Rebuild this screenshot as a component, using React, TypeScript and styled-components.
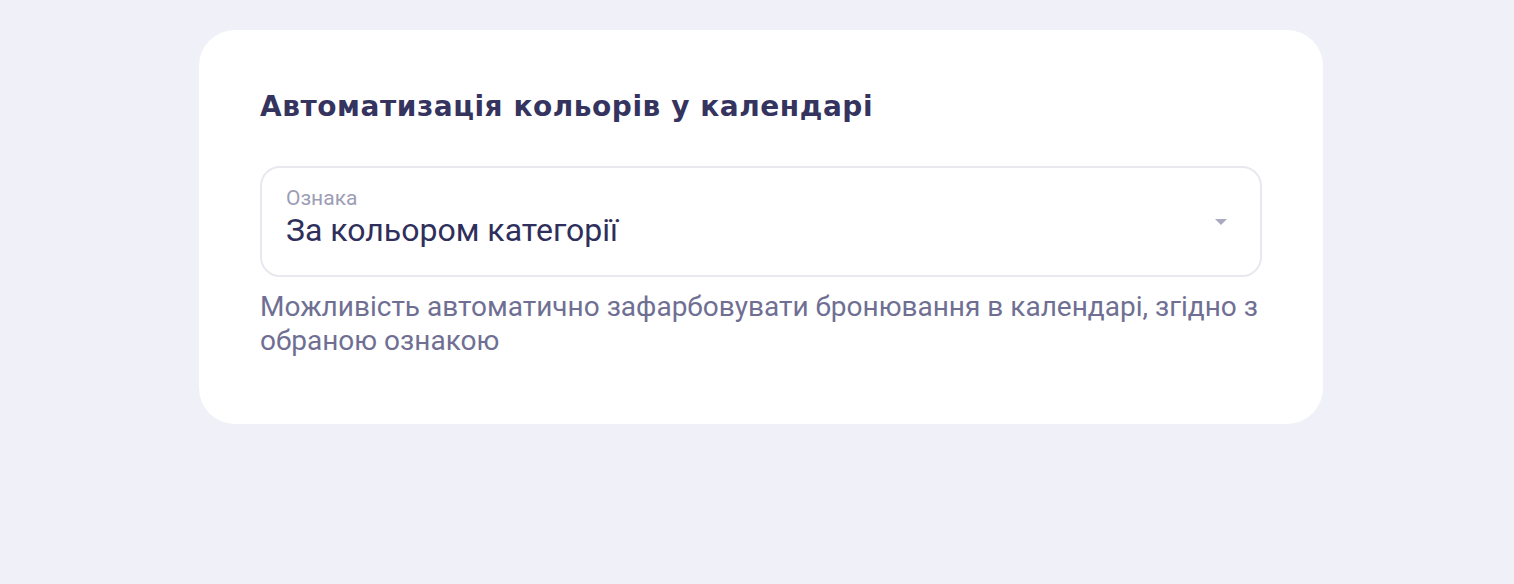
import React from "react";
import styled, { createGlobalStyle } from "styled-components";

const Global = createGlobalStyle`
  html, body { margin: 0; padding: 0; background: #f0f0f9; }
  body { font-family: Roboto, "Noto Sans", sans-serif; }
`;

const Page = styled.div`
  min-height: 584px;
  box-sizing: border-box;
  padding: 30px 0 0 199px;
`;

const Card = styled.section`
  width: 1124px;
  box-sizing: border-box;
  background: #ffffff;
  border-radius: 36px;
  padding: 57px 61px 66px;
  display: flex;
  flex-direction: column;
`;

const Title = styled.h2`
  margin: 0 0 39px;
  font-family: "DejaVu Sans", Lato, sans-serif;
  font-weight: 700;
  font-size: 28px;
  line-height: 40px;
  letter-spacing: 0.55px;
  color: #34345f;
`;

const Select = styled.div`
  height: 111px;
  box-sizing: border-box;
  border: 2px solid #e8e8ef;
  border-radius: 20px;
  padding: 18px 33px 0 24px;
  display: flex;
  align-items: center;
  justify-content: space-between;
`;

const Field = styled.div`
  display: flex;
  flex-direction: column;
  align-self: flex-start;
`;

const Label = styled.span`
  font-size: 21px;
  line-height: 24px;
  color: #9d9db5;
`;

const Value = styled.span`
  margin-top: 1px;
  font-size: 32px;
  line-height: 38px;
  color: #2f2f5c;
`;

const Caret = styled.svg`
  width: 12px;
  height: 6px;
  margin-bottom: 18px;
`;

const Hint = styled.p`
  margin: 13px 0 0;
  font-size: 28px;
  line-height: 34px;
  color: #6f6f93;
`;

export default function App() {
  return (
    <>
      <Global />
      <Page>
        <Card>
          <Title>Автоматизація кольорів у календарі</Title>
          <Select>
            <Field>
              <Label>Ознака</Label>
              <Value>За кольором категорії</Value>
            </Field>
            <Caret viewBox="0 0 12 6">
              <path d="M0 0h12L6 6z" fill="#a9a9c0" />
            </Caret>
          </Select>
          <Hint>
            Можливість автоматично зафарбовувати бронювання в календарі, згідно з обраною ознакою
          </Hint>
        </Card>
      </Page>
    </>
  );
}
